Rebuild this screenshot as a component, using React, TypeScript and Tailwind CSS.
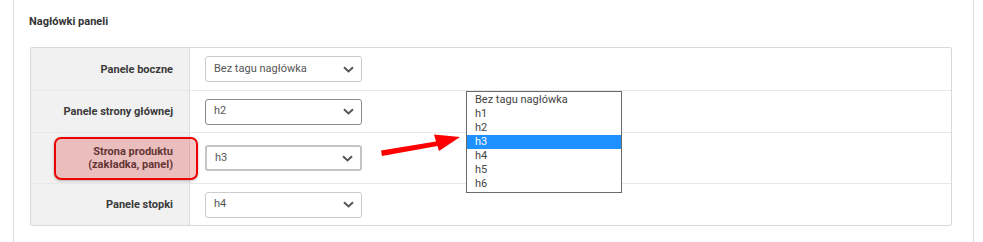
import { FC } from 'react';

const Chevron: FC = () => (
  <svg width="11" height="7" viewBox="0 0 11 7" className="shrink-0">
    <path d="M1 1.2 L5.5 5.4 L10 1.2" fill="none" stroke="#555" strokeWidth="2" />
  </svg>
);

interface SelectProps {
  value: string;
  variant?: 'default' | 'hover' | 'focus';
}

const Select: FC<SelectProps> = ({ value, variant = 'default' }) => {
  const border =
    variant === 'hover'
      ? 'border border-[#8a8a8a]'
      : variant === 'focus'
        ? 'border-2 border-[#c4c4c4]'
        : 'border border-[#cccccc]';
  return (
    <div
      className={`w-[157px] h-[26px] rounded-[3px] bg-white flex items-center justify-between pl-[8px] pr-[7px] text-[11px] text-[#555] ${border}`}
    >
      <span>{value}</span>
      <Chevron />
    </div>
  );
};

const rows = [
  { label: ['Panele boczne'], value: 'Bez tagu nagłówka', h: 'h-[42px]', variant: 'default' as const },
  { label: ['Panele strony głównej'], value: 'h2', h: 'h-[41px]', variant: 'hover' as const },
  { label: ['Strona produktu', '(zakładka, panel)'], value: 'h3', h: 'h-[50px]', variant: 'focus' as const },
  { label: ['Panele stopki'], value: 'h4', h: 'h-[41px]', variant: 'default' as const },
];

const options = ['Bez tagu nagłówka', 'h1', 'h2', 'h3', 'h4', 'h5', 'h6'];

export default function App() {
  return (
    <div className="relative w-[983px] h-[242px] overflow-hidden bg-white font-['Roboto',sans-serif]">
      <div className="ml-[13px] w-[961px] h-full border-x border-[#dddddd]">
        <div className="pl-[15px] pt-[15px] h-[47px] text-[11px] leading-[14px] font-bold text-[#333]">
          Nagłówki paneli
        </div>
        <div className="ml-[16px] w-[922px] border border-[#d9d9d9] rounded-[2px]">
          {rows.map((row, i) => (
            <div
              key={i}
              className={`flex ${i < rows.length - 1 ? 'border-b border-[#e8e8e8]' : ''}`}
            >
              <div
                className={`w-[159px] ${row.h} bg-[#f1f1f1] border-r border-[#dcdcdc] flex flex-col items-end justify-center pr-[16px] text-[11px] leading-[13px] font-bold text-[#3a3a3a]`}
              >
                {row.label.map((l) => (
                  <span key={l}>{l}</span>
                ))}
              </div>
              <div className={`flex-1 ${row.h} flex items-center pl-[15px]`}>
                <Select value={row.value} variant={row.variant} />
              </div>
            </div>
          ))}
        </div>
      </div>

      {/* red highlight over label */}
      <div className="absolute left-[54px] top-[137px] w-[144px] h-[43px] rounded-[7px] border-2 border-[#ee0000] bg-[rgba(220,40,40,0.25)] shadow-[0_1px_3px_rgba(0,0,0,0.25)]" />

      {/* arrow */}
      <svg className="absolute left-[378px] top-[130px]" width="86" height="28" viewBox="0 0 86 28">
        <polygon points="3,20.5 58,11.5 56,4.5 82,7 61,21 59.5,16 4,26" fill="#ff0000" />
      </svg>

      {/* open dropdown list */}
      <div className="absolute left-[466px] top-[91px] w-[156px] h-[102px] border border-[#6b6b6b] bg-white pt-px text-[11px] text-[#444]">
        {options.map((o) => (
          <div
            key={o}
            className={`h-[14px] leading-[14px] pl-[8px] ${o === 'h3' ? 'bg-[#1e90ff] text-white' : ''}`}
          >
            {o}
          </div>
        ))}
      </div>
    </div>
  );
}
